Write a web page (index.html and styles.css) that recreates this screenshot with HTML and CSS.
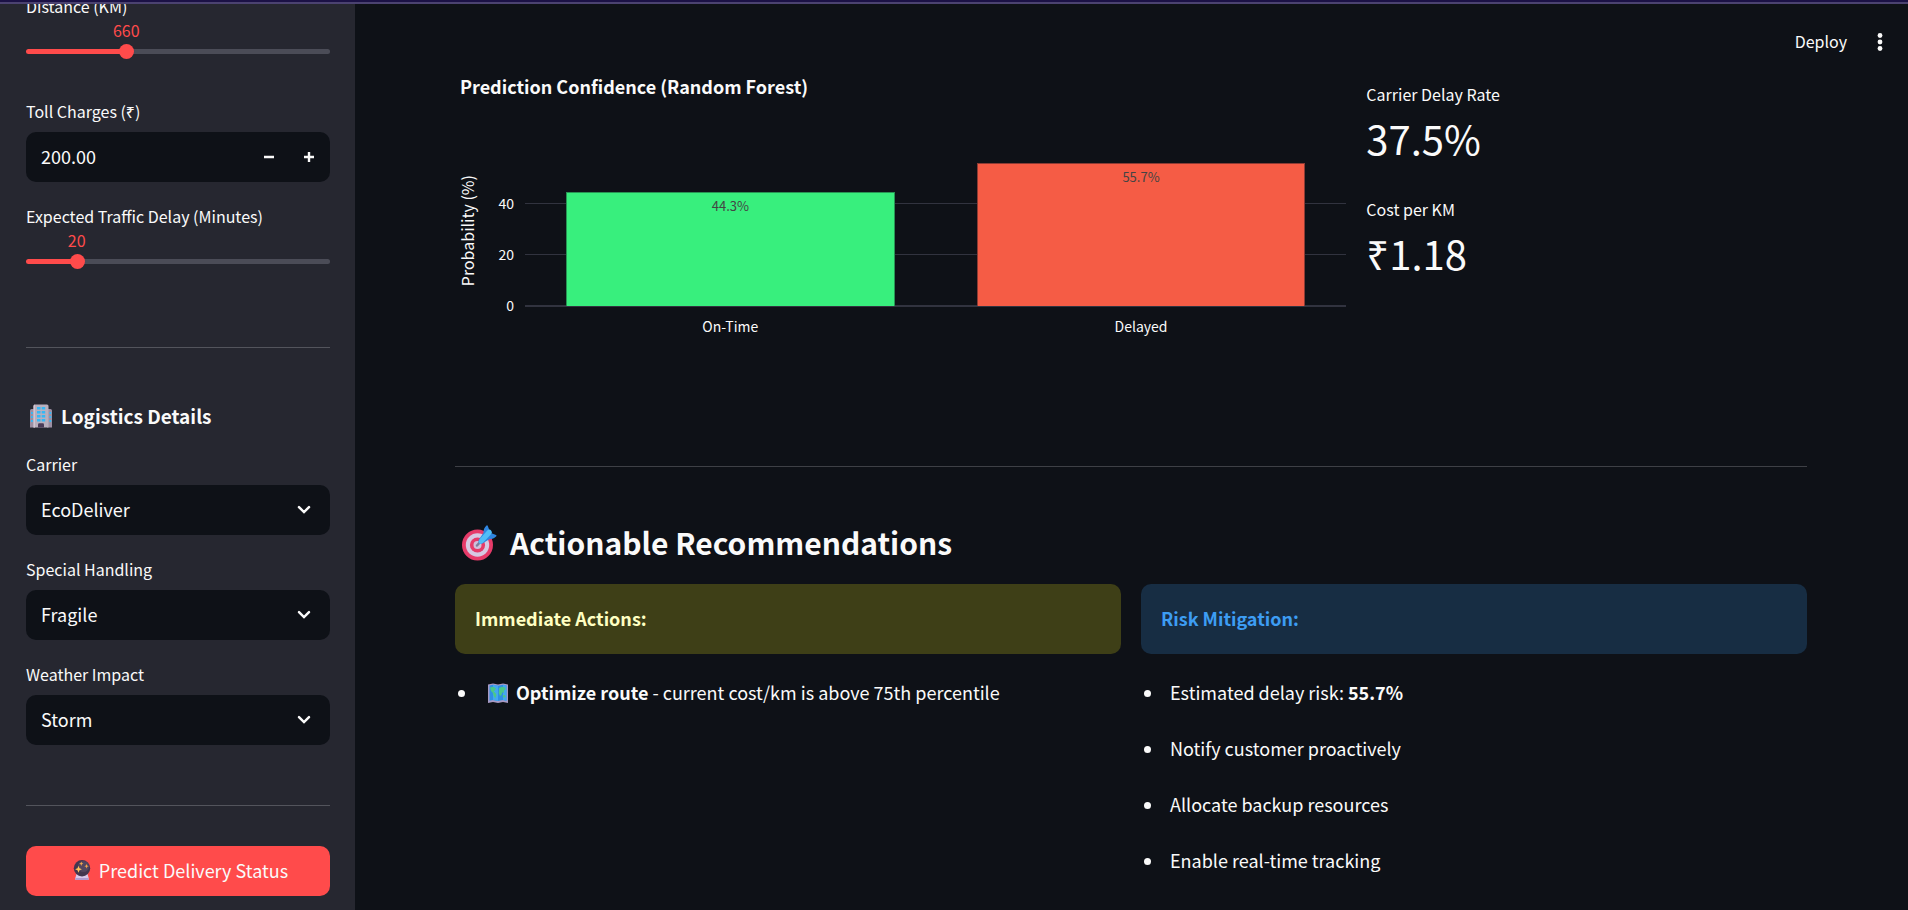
FILE: index.html
```html
<!DOCTYPE html>
<html lang="en">
<head>
<meta charset="utf-8">
<title>Delivery Status Prediction</title>
<link rel="stylesheet" href="styles.css">
</head>
<body>
<div class="strip"></div>
<div class="app">
  <aside class="sidebar">
    <div class="sidebar-content">
      <div class="field">
        <label class="label" for="distance">Distance (KM)</label>
        <div class="slider" style="--pos:33%">
          <output class="slider-value" for="distance">660</output>
          <div class="slider-track"><input type="range" id="distance" min="0" max="2000" value="660"></div>
        </div>
      </div>
      <div class="field">
        <label class="label" for="toll">Toll Charges (₹)</label>
        <div class="number">
          <input type="text" inputmode="decimal" id="toll" value="200.00">
          <button type="button" class="step" aria-label="Decrease"><svg width="12" height="12" viewBox="0 0 12 12"><path d="M1 6h10" stroke="currentColor" stroke-width="2.6"/></svg></button>
          <button type="button" class="step" aria-label="Increase"><svg width="12" height="12" viewBox="0 0 12 12"><path d="M1 6h10M6 1v10" stroke="currentColor" stroke-width="2.4"/></svg></button>
        </div>
      </div>
      <div class="field">
        <label class="label" for="traffic">Expected Traffic Delay (Minutes)</label>
        <div class="slider" style="--pos:16.67%">
          <output class="slider-value" for="traffic">20</output>
          <div class="slider-track"><input type="range" id="traffic" min="0" max="120" value="20"></div>
        </div>
      </div>
      <hr class="rule sidebar-rule">
      <h3 class="sidebar-title">
        <svg width="24" height="24" viewBox="0 0 24 24" aria-hidden="true">
          <path d="M1 6.500q0-1.500 1.500-1.500H6v18.500H1zM18 5h3.500q1.500 0 1.500 1.500v17h-5z" fill="#9b8fa3"/>
          <path d="M4.500 2Q4.500.5 6 .5h12q1.500 0 1.500 1.500v21.500h-15z" fill="#b9afbd"/>
          <path d="M4.500 2v21.500H6V.5Q4.500.5 4.500 2z" fill="#d0c6d3"/>
          <g fill="#35b8f5"><path d="M8 3h3.500v2.500H8zM12.700 3h3.500v2.500h-3.500zM8 7h3.500v2.500H8zM12.700 7h3.500v2.500h-3.500zM8 11h3.500v2.500H8zM12.700 11h3.500v2.500h-3.500zM8 15h3.500v2.500H8zM12.700 15h3.500v2.500h-3.500z"/><path d="M2 8h1.800v2H2zM2 12h1.800v2H2zM2 16h1.800v2H2zM20.400 8h1.800v2h-1.800zM20.400 12h1.800v2h-1.800zM20.400 16h1.800v2h-1.800z"/></g>
          <path d="M9 23.500v-3q0-1.300 1.300-1.300h3.400q1.300 0 1.300 1.300v3z" fill="#493b57"/>
        </svg>
        <span>Logistics Details</span>
      </h3>
      <div class="field">
        <label class="label" for="carrier">Carrier</label>
        <div class="select"><select id="carrier"><option>EcoDeliver</option></select><svg class="chevron" width="14" height="10" viewBox="0 0 14 10"><path d="M2 2.200l5 4.900 5-4.900" fill="none" stroke="currentColor" stroke-width="2.500" stroke-linecap="round"/></svg></div>
      </div>
      <div class="field">
        <label class="label" for="handling">Special Handling</label>
        <div class="select"><select id="handling"><option>Fragile</option></select><svg class="chevron" width="14" height="10" viewBox="0 0 14 10"><path d="M2 2.200l5 4.900 5-4.900" fill="none" stroke="currentColor" stroke-width="2.500" stroke-linecap="round"/></svg></div>
      </div>
      <div class="field">
        <label class="label" for="weather">Weather Impact</label>
        <div class="select"><select id="weather"><option>Storm</option></select><svg class="chevron" width="14" height="10" viewBox="0 0 14 10"><path d="M2 2.200l5 4.900 5-4.900" fill="none" stroke="currentColor" stroke-width="2.500" stroke-linecap="round"/></svg></div>
      </div>
      <hr class="rule sidebar-rule">
      <button type="button" class="predict">
        <svg width="18" height="20" viewBox="0 0 18 20" aria-hidden="true">
          <path d="M3.500 14h11l1.300 4.500q.3 1.500-1.200 1.500H3.400q-1.500 0-1.200-1.500z" fill="#d9c9ea"/>
          <path d="M2.400 18h13.200l.2 1q0 1-1.200 1H3.400q-1.200 0-1.200-1z" fill="#b39bcf"/>
          <circle cx="9" cy="8.200" r="8.200" fill="#44364f"/>
          <circle cx="10.500" cy="6.500" r="5.500" fill="#54465f"/>
          <path d="M5.500 5.800l1 2.500 2.400 1-2.400 1-1 2.500-1-2.500-2.400-1 2.400-1z" fill="#ffc35a"/>
          <path d="M8.300 1.500l.6 1.600 1.500.6-1.500.6-.6 1.600-.6-1.600-1.500-.6 1.500-.6zM13.500 4l.6 1.600 1.500.6-1.500.6-.6 1.600-.6-1.600-1.500-.6 1.500-.6z" fill="#f5a74d"/>
        </svg>
        <span>Predict Delivery Status</span>
      </button>
    </div>
  </aside>
  <main class="main">
    <header class="toolbar">
      <button type="button" class="deploy">Deploy</button>
      <button type="button" class="menu" aria-label="Main menu"><svg width="6" height="20" viewBox="0 0 6 20" fill="currentColor"><circle cx="3" cy="3.500" r="2.400"/><circle cx="3" cy="10" r="2.400"/><circle cx="3" cy="16.500" r="2.400"/></svg></button>
    </header>
    <div class="content">
      <section class="results">
        <div class="chart">
          <h4 class="chart-title">Prediction Confidence (Random Forest)</h4>
          <div class="chart-body">
            <div class="axis-title"><span>Probability (%)</span></div>
            <div class="ticks"><span>40</span><span>20</span><span>0</span></div>
            <div class="plot">
              <div class="gridlines"><i></i><i></i><i></i></div>
              <div class="bars">
                <div class="bar on-time" style="height:74.2%">44.3%</div>
                <div class="bar delayed" style="height:93.2%">55.7%</div>
              </div>
            </div>
            <div class="categories"><span>On-Time</span><span>Delayed</span></div>
          </div>
        </div>
        <dl class="metrics">
          <div class="metric"><dt>Carrier Delay Rate</dt><dd>37.5%</dd></div>
          <div class="metric"><dt>Cost per KM</dt><dd>₹1.18</dd></div>
        </dl>
      </section>
      <hr class="rule">
      <h2 class="heading">
        <svg width="36" height="36" viewBox="0 0 36 36" aria-hidden="true">
          <circle cx="16.500" cy="20" r="15.500" fill="#e63b69"/>
          <circle cx="16.500" cy="20" r="11.700" fill="#d7c9e2"/>
          <circle cx="16.500" cy="20" r="7.600" fill="#e63b69"/>
          <circle cx="16.500" cy="20" r="4" fill="#cfc1dc"/>
          <path d="M16 20.500L20 16" stroke="#7b7f9c" stroke-width="2.500" stroke-linecap="round"/>
          <path d="M18 17.800q-1-2 .3-3.700l4.200-6.300q-.2-4.500 3-7.300.8-.6 1.200.3l1.800 4.700-5.500 7z" fill="#2f86e0"/>
          <path d="M18.500 18.300q2 .8 3.800-.3l6-3.700q4.300 0 7-3 .6-.8-.3-1.200l-4.500-1.800-6.500 5.200z" fill="#2f86e0"/>
          <path d="M18 18.300q-1-2.200.5-4l8-9q2-1.600 3.600.2 1.700 1.700.2 3.600l-8.300 8.600q-1.800 1.600-4 .6z" fill="#50bdf8"/>
        </svg>
        <span>Actionable Recommendations</span>
      </h2>
      <section class="recommendations">
        <div>
          <div class="alert warning">Immediate Actions:</div>
          <ul class="list">
            <li>
              <svg class="map" width="22" height="21" viewBox="0 0 22 21" aria-hidden="true">
                <path d="M1 1.500l5-1 5 1 5-1 5 1V20l-5-1-5 1-5-1-5 1z" fill="#a79ac4"/>
                <path d="M2.500 2.500L6 1.800V17l-3.500.8zM6 1.800l5 1V18l-5-1zM11 2.800l5-1V17l-5 1zM16 1.800l3.500.7v15.300L16 17z" fill="#2f8fe4"/>
                <path d="M6 1.800l5 1V18l-5-1zM16 1.800l3.500.7v15.300L16 17z" fill="#43a8f0"/>
                <path d="M3 4.500l3-.8 3 1.500-1 2-1.500 1.300L8.500 10l1 2-1.300 3.500-1.500-2.700L6 10 4 8zM12 5l3-1.300 3.500 1-.3 2.300-1.500.5.3 2.800-1.600-1.300-1 3-1.400 1-1.300-3L12 8zM15.500 12.500l2.500-.5.6 2-2 .8z" fill="#4bc887"/>
              </svg>
              <span><strong>Optimize route</strong> - current cost/km is above 75th percentile</span>
            </li>
          </ul>
        </div>
        <div>
          <div class="alert info">Risk Mitigation:</div>
          <ul class="list">
            <li><span>Estimated delay risk: <strong>55.7%</strong></span></li>
            <li><span>Notify customer proactively</span></li>
            <li><span>Allocate backup resources</span></li>
            <li><span>Enable real-time tracking</span></li>
          </ul>
        </div>
      </section>
    </div>
  </main>
</div>
</body>
</html>
```
FILE: styles.css
```css
:root {
  --bg: #0e1117;
  --panel: #262730;
  --text: #fafafa;
  --primary: #ff4b4b;
  --line: #3e4046;
}

* { box-sizing: border-box; }

body {
  margin: 0;
  height: 100vh;
  display: flex;
  flex-direction: column;
  overflow: hidden;
  background: var(--bg);
  color: var(--text);
  font: 18px/30px "Noto Sans CJK SC", "Noto Sans", sans-serif;
}

button, input, select { font: inherit; color: inherit; }
button { border: 0; padding: 0; background: none; cursor: pointer; }
h2, h3, h4, dl, dd, ul { margin: 0; padding: 0; }

.strip {
  flex: none;
  height: 4px;
  background: #1b1145;
  border-bottom: 2px solid #4b4270;
}

.app { flex: 1; min-height: 0; display: flex; }

/* Sidebar */
.sidebar {
  flex: none;
  width: 355px;
  padding: 0 25px 0 26px;
  overflow: hidden;
  background: var(--panel);
}
/* The panel is shown scrolled: its first label runs under the strip. */
.sidebar-content { margin-top: -12px; }

.field { min-height: 85px; margin-bottom: 20px; }
.label { display: block; height: 30px; margin-bottom: 5px; font-size: 16px; line-height: 28px; }

.slider { position: relative; padding-top: 22px; }
.slider-value {
  position: absolute;
  top: -6px;
  left: var(--pos);
  transform: translateX(-50%);
  color: var(--primary);
  font-size: 16px;
  line-height: 18px;
}
.slider-track {
  display: flex;
  align-items: center;
  height: 5px;
  border-radius: 3px;
  background: linear-gradient(to right, var(--primary) var(--pos), #4b4c57 var(--pos));
}
.slider-track input {
  appearance: none;
  flex: none;
  width: calc(100% + 15px);
  height: 15px;
  margin: 0 -8px 0 -7px;
  background: none;
}
.slider-track input::-webkit-slider-thumb {
  appearance: none;
  width: 15px;
  height: 15px;
  border-radius: 50%;
  background: var(--primary);
}

.number, .select {
  display: flex;
  height: 50px;
  border-radius: 10px;
  background: var(--bg);
  overflow: hidden;
}
.number input {
  flex: 1;
  min-width: 0;
  border: 0;
  padding: 0 15px 2px;
  background: none;
}
.step { width: 40px; display: grid; place-items: center; }
.step:last-child { margin-right: 1px; }

.select { position: relative; }
.select select {
  appearance: none;
  width: 100%;
  border: 0;
  padding: 0 15px 2px;
  background: none;
}
.chevron { position: absolute; right: 19px; top: 20px; pointer-events: none; }

.rule { height: 1px; margin: 0; border: 0; background: var(--line); }
.sidebar-rule { margin: 60px 0 40px; background: #53545c; }

.sidebar-title {
  display: flex;
  align-items: center;
  gap: 8px;
  padding: 13px 0 19px 3px;
  font-size: 19px;
  font-weight: 600;
}

.predict {
  display: flex;
  align-items: center;
  justify-content: center;
  gap: 8px;
  width: 100%;
  height: 50px;
  padding: 0 0 2px 5px;
  border-radius: 10px;
  background: var(--primary);
}

/* Main area */
.main { position: relative; flex: 1; min-width: 0; overflow: hidden; }

.toolbar {
  position: absolute;
  top: 0;
  right: 0;
  display: flex;
  align-items: center;
  gap: 30px;
  height: 75px;
  padding-right: 25px;
}
.deploy { padding-bottom: 2px; font-size: 16px; }
.menu { display: grid; }

.content { padding: 67px 101px 0 100px; }

.results { display: flex; gap: 20px; height: 395px; }
.chart { flex: 1 1 calc(66.667% - 20px); min-width: 0; }
.metrics { flex: 1 1 calc(33.333% - 20px); padding-top: 8px; }

.chart-title { padding-left: 5px; font-size: 18px; font-weight: 700; }

.chart-body {
  display: grid;
  grid-template-columns: 24px 36px minmax(0, 1fr);
  column-gap: 5px;
  margin-top: 52px;
}
.axis-title { display: flex; align-items: center; justify-content: center; height: 155px; }
.axis-title span {
  writing-mode: vertical-rl;
  transform: rotate(180deg);
  font-size: 16px;
  line-height: 24px;
  white-space: nowrap;
}
.ticks { display: grid; grid-auto-rows: 51px; padding-top: 25px; height: 153px; font-size: 14px; text-align: right; padding-right: 6px; }
.ticks span { line-height: 51px; }

.plot { display: grid; height: 153px; }
.gridlines, .bars { grid-area: 1 / 1; }
.gridlines { display: grid; grid-template-rows: repeat(3, 1fr); }
.gridlines i { border-bottom: 1px solid #31333f; }
.gridlines i:last-child { margin-bottom: -1px; border-bottom: 2px solid #31333f; }

.bars { display: grid; grid-template-columns: 1fr 1fr; align-items: end; justify-items: center; }
.bar {
  width: 80%;
  border: 1px solid;
  border-bottom: 0;
  color: #444;
  font-size: 13px;
  line-height: 26px;
  text-align: center;
}
.on-time { background: #38ef7d; border-color: #289453; }
.delayed { background: #f55c45; border-color: #8c3b34; }

.categories {
  grid-column: 3;
  display: grid;
  grid-template-columns: 1fr 1fr;
  padding-top: 3px;
  font-size: 14px;
  text-align: center;
}

.metric { height: 115px; }
.metric dt { font-size: 16px; }
.metric dd { font-size: 40px; line-height: 58px; }

.heading {
  display: flex;
  align-items: center;
  gap: 13px;
  padding: 52px 0 17px 6px;
  font-size: 30px;
  line-height: 48px;
  font-weight: 600;
}
.heading span { line-height: 46px; padding-bottom: 2px; }

.recommendations { display: grid; grid-template-columns: 1fr 1fr; gap: 20px; }
.alert { padding: 19px 20px 21px; border-radius: 10px; font-weight: 600; }
.warning { background: #3e3f17; color: #ffffc2; }
.info { background: #172d43; color: #3d9df3; }

.list { display: grid; gap: 26px; padding-top: 24px; list-style: none; }
.list li { display: flex; align-items: center; }
.list span { padding-bottom: 2px; line-height: 28px; }
.list li::before {
  content: "";
  width: 7px;
  height: 7px;
  margin: 0 19px 0 3px;
  border-radius: 50%;
  background: currentColor;
}
.map { margin: 0 7px 0 3px; }
```
